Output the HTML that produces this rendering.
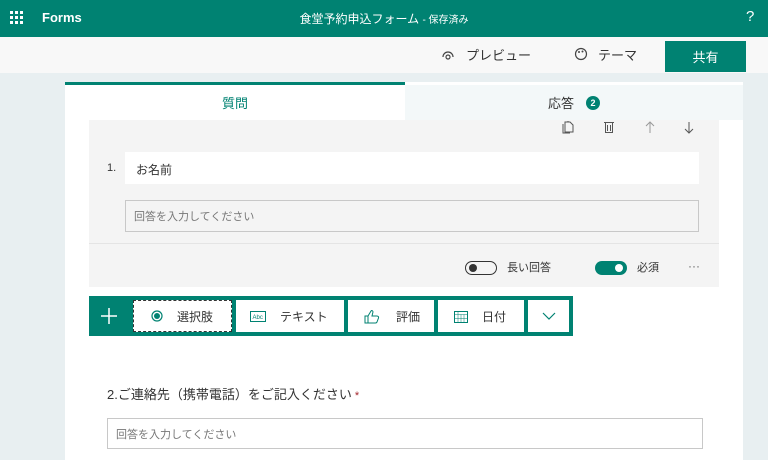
<!DOCTYPE html><html><head><meta charset="utf-8"><style>
*{box-sizing:border-box;margin:0;padding:0}
body{width:768px;height:460px;overflow:hidden;background:#e8eff1;font-family:"Liberation Sans","Noto Sans CJK JP",sans-serif;color:#333;position:relative}
.a{position:absolute}
.hdr{left:0;top:0;width:768px;height:37px;background:#008272;color:#fff}
.sub{left:0;top:37px;width:768px;height:36px;background:#f8f8f8}
.tb{height:38px;display:flex;align-items:center;justify-content:center;font-size:13px}
.inp{background:#fff;border:1px solid #c8c8c8;font-size:11px;color:#777;padding-left:8px;display:flex;align-items:center}
.btn{position:absolute;top:300px;height:32px;background:#fff;display:flex;align-items:center;font-size:12px;color:#333}
</style></head><body>
<div class="a hdr">
 <svg class="a" style="left:10px;top:11px" width="14" height="14"><g fill="#fff"><rect x="0" y="0" width="3" height="3"/><rect x="5" y="0" width="3" height="3"/><rect x="10" y="0" width="3" height="3"/><rect x="0" y="5" width="3" height="3"/><rect x="5" y="5" width="3" height="3"/><rect x="10" y="5" width="3" height="3"/><rect x="0" y="10" width="3" height="3"/><rect x="5" y="10" width="3" height="3"/><rect x="10" y="10" width="3" height="3"/></g></svg>
 <div class="a" style="left:42px;top:10px;font-size:13px;font-weight:bold">Forms</div>
 <div class="a" style="left:0;width:768px;top:10px;text-align:center;font-size:12px">食堂予約申込フォーム <span style="font-size:10px">- 保存済み</span></div>
 <div class="a" style="left:746px;top:8px;font-size:15px">?</div>
</div>
<div class="a sub">
 <svg class="a" style="left:441px;top:10px" width="14" height="14"><path d="M2 10a5 5 0 0 1 10 0" fill="none" stroke="#444" stroke-width="1.2"/><circle cx="7" cy="10" r="2" fill="none" stroke="#444" stroke-width="1.2"/></svg>
 <div class="a" style="left:466px;top:8px;font-size:13px">プレビュー</div>
 <svg class="a" style="left:574px;top:10px" width="14" height="14"><circle cx="7" cy="7" r="5.5" fill="none" stroke="#444" stroke-width="1.2"/><circle cx="5" cy="5" r="1" fill="#444"/><circle cx="8.5" cy="4.5" r="1" fill="#444"/></svg>
 <div class="a" style="left:598px;top:8px;font-size:13px">テーマ</div>
 <div class="a" style="left:665px;top:4px;width:81px;height:31px;background:#008272;color:#fff;font-size:13px;display:flex;align-items:center;justify-content:center">共有</div>
</div>
<div class="a" style="left:65px;top:82px;width:678px;height:378px;background:#fff"></div>
<div class="a tb" style="left:65px;top:82px;width:340px;background:#fff;border-top:3px solid #008272;color:#008272">質問</div>
<div class="a tb" style="left:405px;top:85px;width:338px;height:35px;background:#f3f8f9;color:#333">応答 <span style="display:inline-block;width:14px;height:14px;border-radius:7px;background:#008272;color:#fff;font-size:9px;font-weight:bold;line-height:14px;text-align:center;margin-left:12px">2</span></div>
<div class="a" style="left:89px;top:120px;width:630px;height:167px;background:#f4f4f4"></div>
<svg class="a" style="left:562px;top:120px" width="140" height="14"><g fill="none" stroke="#555" stroke-width="1"><path d="M3 2h5l3 3v7H3z M6 2v-1"/><path d="M1 4v9h7"/><rect x="43.5" y="2.5" width="7" height="10"/><path d="M42 2.5h10M45.5 5v6M48.5 5v6"/><path d="M88 2v11M84 6l4-4 4 4" stroke="#999"/><path d="M127 2v11M123 9l4 4 4-4"/></g></svg>
<div class="a" style="left:107px;top:162px;font-size:11px">1.</div>
<div class="a" style="left:125px;top:152px;width:574px;height:32px;background:#fff;font-size:12px;padding:9px 11px">お名前</div>
<div class="a inp" style="left:125px;top:200px;width:574px;height:32px;background:#f4f4f4">回答を入力してください</div>
<div class="a" style="left:89px;top:243px;width:630px;height:1px;background:#e4e4e4"></div>
<div class="a" style="left:465px;top:261px;width:32px;height:14px;border:1.5px solid #333;border-radius:7px"><div class="a" style="left:3px;top:2px;width:8px;height:8px;border-radius:4px;background:#333"></div></div>
<div class="a" style="left:507px;top:259px;font-size:11px">長い回答</div>
<div class="a" style="left:595px;top:261px;width:32px;height:14px;background:#008272;border-radius:7px"><div class="a" style="left:20px;top:3px;width:8px;height:8px;border-radius:4px;background:#fff"></div></div>
<div class="a" style="left:637px;top:259px;font-size:11px">必須</div>
<div class="a" style="left:688px;top:259px;font-size:12px;color:#666">···</div>
<div class="a" style="left:89px;top:296px;width:484px;height:40px;background:#008272"></div>
<svg class="a" style="left:101px;top:308px" width="16" height="16"><path d="M8 0v16M0 8h16" stroke="#fff" stroke-width="1.5"/></svg>
<div class="btn" style="left:133px;width:99px;border:1px dashed #333"><svg style="margin:0 14px 0 17px" width="12" height="12"><circle cx="6" cy="6" r="5" fill="none" stroke="#008272" stroke-width="1.2"/><circle cx="6" cy="6" r="3" fill="#008272"/></svg>選択肢</div>
<div class="btn" style="left:236px;width:108px"><svg style="margin:0 14px 0 14px" width="16" height="11"><rect x="0.5" y="0.5" width="15" height="10" fill="none" stroke="#008272"/><text x="2.5" y="8" font-size="6" fill="#008272" font-family="Liberation Sans">Abc</text></svg>テキスト</div>
<div class="btn" style="left:348px;width:86px"><svg style="margin:0 16px 0 16px" width="16" height="15"><path d="M1 7h3v7H1z M4 7l3-5c1-1 2 0 2 1l-1 4h5c1 0 2 1 1.5 2l-1.5 4c-.3.7-1 1-1.5 1H4" fill="none" stroke="#008272" stroke-width="1"/></svg>評価</div>
<div class="btn" style="left:438px;width:86px"><svg style="margin:0 14px 0 16px" width="14" height="13"><rect x="0.5" y="1.5" width="13" height="11" fill="none" stroke="#008272"/><path d="M0.5 4.5h13M4 1.5v11M7 4.5v8M10 4.5v8M0.5 8.5h13" stroke="#008272" stroke-width="0.5"/></svg>日付</div>
<div class="btn" style="left:528px;width:41px;justify-content:center"><svg width="14" height="8"><path d="M1 1l6 6 6-6" fill="none" stroke="#008272" stroke-width="1.2"/></svg></div>
<div class="a" style="left:107px;top:384px;font-size:13px">2.ご連絡先（携帯電話）をご記入ください<span style="color:#a4262c;font-size:11px"> *</span></div>
<div class="a inp" style="left:107px;top:418px;width:596px;height:31px">回答を入力してください</div>
</body></html>
